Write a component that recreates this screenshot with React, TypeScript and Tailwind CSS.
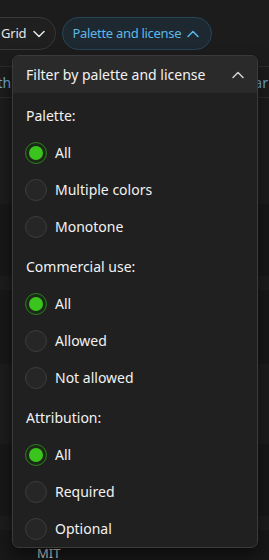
import React from 'react';

const font = { fontFamily: '"Segoe UI", "Noto Sans", "Open Sans", sans-serif' };

interface RadioRowProps {
  label: string
  checked?: boolean
}

const RadioRow: React.FC<RadioRowProps> = ({ label, checked }) => {
  return (
    <div className="flex h-[37px] items-center gap-[8px]">
      {checked ? (
        <div className="flex h-[22px] w-[22px] items-center justify-center rounded-full border border-[#2f7d22] bg-[#1b2a18]">
          <div className="h-[14px] w-[14px] rounded-full bg-[#3cc41e]" />
        </div>
      ) : (
        <div className="h-[22px] w-[22px] rounded-full border border-[#3c3c3c] bg-[#262626]" />
      )}
      <span className="text-[14px] leading-[20px] text-[#f2f2f2]">{label}</span>
    </div>
  )
}

interface SectionProps {
  title: string
  options: string[]
}

const Section: React.FC<SectionProps> = ({ title, options }) => {
  return (
    <div className="flex flex-col">
      <div className="pl-[1px] text-[14px] leading-[20px] text-[#f2f2f2]">{title}</div>
      <div className="mt-[8px] flex flex-col">
        {options.map((o, i) => <RadioRow key={o} label={o} checked={i === 0} />)}
      </div>
    </div>
  )
}

const ChevronDown = ({ color }: { color: string }) => (
  <svg width="14" height="14" viewBox="0 0 14 14" fill="none">
    <path d="M2 4.5 L7 9.5 L12 4.5" stroke={color} strokeWidth="1.5" strokeLinecap="round" strokeLinejoin="round" />
  </svg>
)

const ChevronUp = ({ color }: { color: string }) => (
  <svg width="14" height="14" viewBox="0 0 14 14" fill="none">
    <path d="M2 9.5 L7 4.5 L12 9.5" stroke={color} strokeWidth="1.5" strokeLinecap="round" strokeLinejoin="round" />
  </svg>
)

export default function App() {
  return (
    <div className="relative h-[560px] w-[269px] overflow-hidden bg-[#1c1c1c]" style={font}>
      {/* top filter bar */}
      <div className="flex h-[66px] items-center gap-[6px] pt-[1px]">
        <div className="ml-[-30px] flex h-[33px] items-center gap-[6px] rounded-full border border-[#383838] bg-[#1f1f1f] pl-[30px] pr-[9px]">
          <span className="text-[13px] tracking-[-0.2px] text-[#e6e6e6]">Grid</span>
          <ChevronDown color="#e6e6e6" />
        </div>
        <div className="flex h-[33px] items-center gap-[5px] rounded-full border border-[#26465a] bg-[#1d2831] pl-[9px] pr-[11px]">
          <span className="text-[13px] tracking-[-0.3px] text-[#5cb8e8]">Palette and license</span>
          <ChevronUp color="#5cb8e8" />
        </div>
      </div>

      {/* tabs row behind */}
      <div className="flex h-[32px] items-center justify-between border-y border-[#2c2c2c] text-[14px] text-[#6fa8d6]">
        <span className="ml-[-20px]">Both</span>
        <span className="mr-[1px]">Year</span>
      </div>

      {/* cards behind */}
      <div className="mt-[106px] flex flex-col gap-[14px]">
        <div className="h-[72px] bg-[#181818]" />
        <div className="h-[74px] bg-[#181818]" />
        <div className="mt-[66px] h-[72px] bg-[#181818]" />
        <div className="h-[40px] bg-[#181818] pl-[37px] pt-[14px] text-[13px] text-[#cfcfcf]">MIT</div>
      </div>

      {/* popup */}
      <div className="absolute left-[12px] top-[55px] flex h-[493px] w-[246px] flex-col overflow-hidden rounded-[7px] border border-[#3a3a3a] bg-[#202020] shadow-[0_8px_16px_rgba(0,0,0,0.5)]">
        <div className="flex h-[37px] shrink-0 items-center justify-between bg-[#2a2a2a] pl-[13px] pr-[12px]">
          <span className="text-[14px] text-[#f2f2f2]">Filter by palette and license</span>
          <ChevronUp color="#d0d0d0" />
        </div>
        <div className="flex flex-col gap-[12px] pl-[12px] pt-[13px]">
          <Section title="Palette:" options={['All', 'Multiple colors', 'Monotone']} />
          <Section title="Commercial use:" options={['All', 'Allowed', 'Not allowed']} />
          <Section title="Attribution:" options={['All', 'Required', 'Optional']} />
        </div>
      </div>
    </div>
  );
}
